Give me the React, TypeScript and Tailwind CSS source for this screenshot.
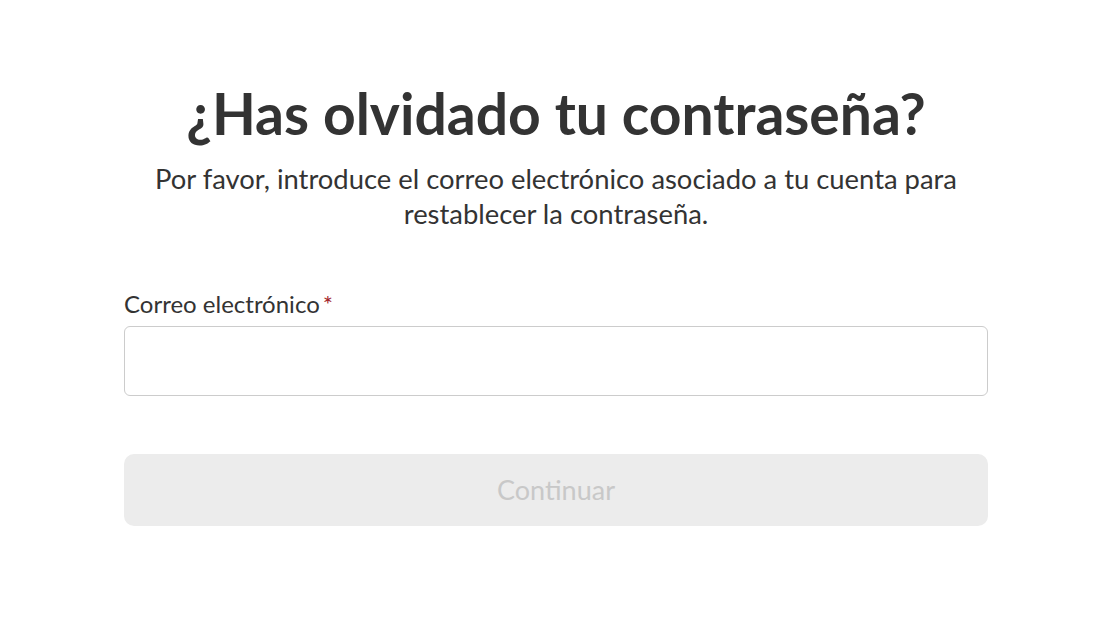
export default function App() {
  return (
    <main className="min-h-screen bg-white font-['Lato','Noto_Sans',sans-serif] text-[#333333]">
      <div className="mx-auto w-[864px] pt-[80px]">
        <h1 className="text-center text-[57px] font-bold leading-[66px]">¿Has olvidado tu contraseña?</h1>
        <p className="mx-auto mt-[15px] w-[850px] text-center text-[27.4px] leading-[35px]">
          Por favor, introduce el correo electrónico asociado a tu cuenta para restablecer la contraseña.
        </p>
        <form className="mt-[58px]">
          <label className="block text-[24px] leading-[30px]">
            Correo electrónico<span className="ml-[3px] text-[#a4262c]">*</span>
          </label>
          <input
            type="email"
            className="mt-[7px] block h-[70px] w-full rounded-[6px] border border-[#cccccc] bg-white px-4 text-[22px] outline-none"
          />
          <button
            type="button"
            disabled
            className="mt-[58px] flex h-[72px] w-full items-center justify-center rounded-[10px] bg-[#ececec] text-[27px] text-[#c8c8c8]"
          >
            Continuar
          </button>
        </form>
      </div>
    </main>
  );
}
